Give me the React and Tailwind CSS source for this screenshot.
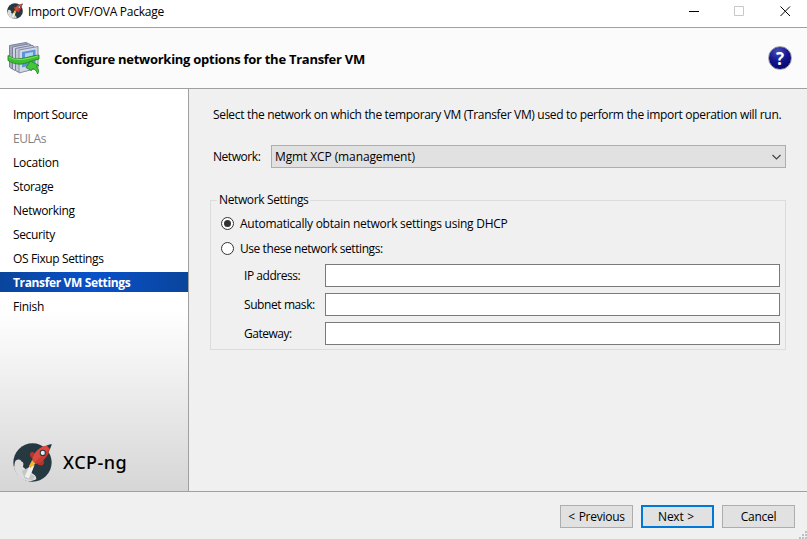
function RocketLogo({ className }) {
  return (
    <svg viewBox="0 0 114 114" className={className} aria-hidden="true">
      <circle cx="57" cy="57" r="56" fill="#263840" />
      <path d="M5 59C5 48 20 44 25 54C33 56 30 66 29 70C36 74 38 79 40 83L52 74L60 70L54 88C60 91 69 96 68 106C45 119 14 108 3 72Z" fill="#dcdcdc" />
      <path d="M26 82L52 68L50 90L64 98L57 109L34 104Z" fill="#c3c5c6" />
      <path d="M34 98L48 68L63 64L46 104Z" fill="#efefef" />
      <path d="M48 65L56 50L66 60L50 74Z" fill="#f5b52c" />
      <path d="M50 29Q56 23 62 29L70 30L57 45L50 39Z" fill="#b8342e" />
      <path d="M72 55L88 50Q94 58 86 66L74 64Z" fill="#b8342e" />
      <path d="M56 50C60 27 78 9 99 7L108 16C104 36 89 55 67 61Z" fill="#dc4a40" />
      <path d="M98 7L112 3L113 5L108 18Z" fill="#263840" />
      <path d="M63 56L107 17C104 36 88 55 68 61Z" fill="#c43c34" />
      <circle cx="87" cy="29" r="9" fill="#263840" />
      <circle cx="87" cy="29" r="6" fill="#e5f1f3" />
    </svg>
  );
}

function ImportIcon() {
  return (
    <svg viewBox="0 0 34 34" className="h-[34px] w-[34px]" aria-hidden="true">
      <path d="M2.5 4.500L19 1.500L21 2.500V24L5 28L2.500 26Z" fill="#a3aac0" stroke="#7a809c" />
      <path d="M5.500 6L22 2.800L24 4V25L8 29.500L5.500 28Z" fill="#d0d4e1" stroke="#7a809c" />
      <path d="M8.500 7.500L25 4.200L27 5.500V26L11 31L8.500 29.500Z" fill="#c3c8d8" stroke="#7a809c" />
      <path d="M12 9L31 5.500V27L12 32Z" fill="#d2d8e6" stroke="#858ca6" />
      <path d="M15 11L28.500 8.500V23L15 26.500Z" fill="#5e94d6" />
      <path d="M18 12.500L26 11V16L18 17.500Z" fill="#b4d3f3" />
      <path d="M1 14.500C5 17 9 18.500 13 17.800C19 17.200 25 14.500 32 14V18C25 19.500 19 23 13 23.200C8 23 4 21.500 1 19.500Z" fill="#3fbd33" stroke="#1f8c1e" strokeWidth=".9" />
      <path d="M2 16C8 19.500 16 19.500 31 15" fill="none" stroke="#80e36b" strokeWidth="1" />
      <path d="M19 26.500L23.500 20L32 24.500L29 25.300C31.500 27.500 32.500 30 30.500 33C30 30 28 28.200 25.500 27.500L24.500 29.500Z" fill="#45c638" stroke="#1f8c1e" strokeWidth=".9" />
    </svg>
  );
}

function HelpIcon() {
  return (
    <div className="flex h-6 w-6 items-center justify-center rounded-full border border-[#a3a3aa] bg-[radial-gradient(circle_at_40%_20%,#4a4eb8_0%,#15158f_45%,#000062_100%)] text-[17px] leading-none font-bold text-white">
      ?
    </div>
  );
}

const steps = [
  { label: "Import Source", style: "tracking-[-0.4px]" },
  { label: "EULAs", style: "text-[#838383] tracking-[-0.4px]" },
  { label: "Location", style: "tracking-[-0.25px]" },
  { label: "Storage", style: "tracking-[-0.35px]" },
  { label: "Networking", style: "tracking-[-0.3px]" },
  { label: "Security", style: "tracking-[-0.35px]" },
  { label: "OS Fixup Settings", style: "tracking-[-0.37px]" },
  { label: "Transfer VM Settings", style: "bg-linear-to-r from-[#0a459c] via-[#0950ca] to-[#0a459c] font-bold text-white tracking-[-0.36px]" },
  { label: "Finish", style: "tracking-[-0.25px]" },
];

function Radio({ checked, label, style }) {
  return (
    <label className="flex h-[17px] items-center gap-[6px]">
      <span className="flex h-[13px] w-[13px] items-center justify-center rounded-full border border-[#333] bg-white">
        {checked && <span className="h-[7px] w-[7px] rounded-full bg-[#333]" />}
      </span>
      <span className={style}>{label}</span>
    </label>
  );
}

function Field({ label, style }) {
  return (
    <label className="flex h-[23px] items-center">
      <span className={`w-[81px] ${style}`}>{label}</span>
      <input className="h-[23px] w-[455px] border border-[#7a7a7a] bg-white px-1 outline-none" />
    </label>
  );
}

export default function App() {
  return (
    <div className="flex h-[539px] w-[807px] flex-col overflow-hidden bg-[#f0f0f0] font-['Open_Sans','Noto_Sans',sans-serif] text-[12px] leading-[16px] whitespace-nowrap text-black">
      <header className="flex h-[28px] shrink-0 items-start border-b border-[#a0a0a0] bg-white pl-[7px]">
        <RocketLogo className="mt-[3px] h-4 w-4" />
        <span className="mt-[4px] ml-[5px] tracking-[-0.25px]">Import OVF/OVA Package</span>
        <div className="mt-[6px] mr-[16px] ml-auto flex">
          <svg className="mr-[34px] h-[11px] w-[11px]" viewBox="0 0 11 11"><path d="M0 5.5H10" stroke="#000" /></svg>
          <svg className="mr-[35px] h-[11px] w-[11px]" viewBox="0 0 11 11"><path d="M.5.5H9.5V9.5H.5Z" fill="none" stroke="#c8c8c8" /></svg>
          <svg className="h-[11px] w-[11px]" viewBox="0 0 11 11"><path d="M.5.5L10 10M10 .5L.5 10" stroke="#000" /></svg>
        </div>
      </header>
      <section className="flex h-[61px] shrink-0 items-center border-b border-[#a0a0a0] bg-[#fbfbfb] pr-[15px] pl-[7px]">
        <ImportIcon />
        <h1 className="ml-[13px] pt-[2px] text-[13px] font-bold tracking-[-0.27px]">Configure networking options for the Transfer VM</h1>
        <div className="ml-auto"><HelpIcon /></div>
      </section>
      <div className="flex h-[403px] shrink-0 border-b border-[#a0a0a0]">
        <aside className="flex w-[189px] shrink-0 flex-col border-r border-[#a0a0a0] bg-linear-to-b from-white from-55% to-[#d6d6d6] pt-[15px]">
          <nav className="flex flex-col gap-1">
            {steps.map((step) => (
              <div key={step.label} className={`flex h-5 items-center pt-[2px] pl-[13px] ${step.style}`}>
                <span>{step.label}</span>
              </div>
            ))}
          </nav>
          <div className="mt-auto mb-[9px] flex items-center pl-[13px]">
            <RocketLogo className="h-[39px] w-[39px]" />
            <span className="mb-[2px] ml-[11px] font-['Noto_Sans',sans-serif] text-[18px] leading-[24px] font-medium tracking-[0.5px]">XCP-ng</span>
          </div>
        </aside>
        <main className="flex flex-1 flex-col pt-[18px]">
          <p className="ml-[24px] tracking-[-0.326px]">Select the network on which the temporary VM (Transfer VM) used to perform the import operation will run.</p>
          <div className="mt-[22px] ml-[24px] flex h-[23px] items-center">
            <span className="w-[58px] tracking-[-0.45px]">Network:</span>
            <button className="flex h-[23px] w-[515px] items-center justify-between border border-[#adadad] bg-[#e1e1e1] pr-[4px] pl-[3px]">
              <span className="tracking-[-0.11px]">Mgmt XCP (management)</span>
              <svg className="h-[6px] w-[9px]" viewBox="0 0 9 6"><path d="M.5 1L4.5 5L8.5 1" fill="none" stroke="#444" strokeWidth="1.2" /></svg>
            </button>
          </div>
          <fieldset className="mt-[24px] ml-[21px] h-[158px] w-[576px] border border-[#dcdcdc] pl-[10px]">
            <legend className="-ml-[4px] px-[2px] tracking-[-0.37px]">Network Settings</legend>
            <div className="mt-[7px] flex flex-col gap-[8px]">
              <Radio checked label="Automatically obtain network settings using DHCP" style="tracking-[-0.25px]" />
              <Radio label="Use these network settings:" style="tracking-[-0.43px]" />
            </div>
            <div className="mt-[7px] ml-[23px] flex flex-col gap-[6px]">
              <Field label="IP address:" style="tracking-[-0.45px]" />
              <Field label="Subnet mask:" style="tracking-[-0.41px]" />
              <Field label="Gateway:" style="tracking-[-0.48px]" />
            </div>
          </fieldset>
        </main>
      </div>
      <footer className="flex flex-1 items-start justify-end gap-[8px] pt-[13px]">
        <button className="h-[23px] w-[73px] border border-[#adadad] bg-[#e1e1e1] tracking-[-0.25px] [word-spacing:1px]">&lt; Previous</button>
        <button className="h-[23px] w-[73px] border-2 border-[#0078d7] bg-[#e1e1e1] pr-[3px] tracking-[-0.25px] [word-spacing:1px]">Next &gt;</button>
        <button className="h-[23px] w-[73px] border border-[#adadad] bg-[#e1e1e1] tracking-[-0.25px]">Cancel</button>
        <svg className="-ml-[4px] h-[8px] w-[8px] self-end" viewBox="0 0 8 8" fill="#bfbfbf"><path d="M6 0h2v2H6zM3 3h2v2H3zM6 3h2v2H6zM0 6h2v2H0zM3 6h2v2H3zM6 6h2v2H6z" /></svg>
      </footer>
    </div>
  );
}
